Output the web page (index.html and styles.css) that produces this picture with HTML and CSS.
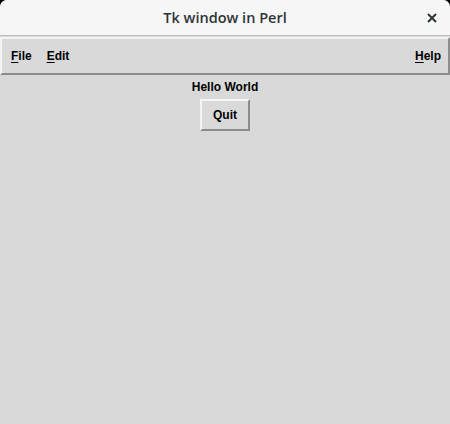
FILE: index.html
```html
<!DOCTYPE html>
<html>
<head>
<meta charset="utf-8">
<link rel="stylesheet" href="styles.css">
</head>
<body>
<div class="window">
  <div class="titlebar">
    <span class="title">Tk window in Perl</span>
    <svg class="close" width="10" height="10" viewBox="0 0 10 10"><path d="M1 1 L9 9 M9 1 L1 9" stroke="#2e3436" stroke-width="2"/></svg>
  </div>
  <div class="menubar">
    <span class="menu"><u>F</u>ile</span>
    <span class="menu"><u>E</u>dit</span>
    <span class="spacer"></span>
    <span class="menu"><u>H</u>elp</span>
  </div>
  <div class="content">
    <div class="label">Hello World</div>
    <div class="button">Quit</div>
  </div>
</div>
</body>
</html>
```
FILE: styles.css
```css
html, body {
  margin: 0;
  padding: 0;
  background: #000;
  width: 450px;
  height: 424px;
  overflow: hidden;
}
.window {
  width: 450px;
  height: 424px;
  background: #d9d9d9;
  border-radius: 7px 7px 0 0;
  overflow: hidden;
  display: flex;
  flex-direction: column;
}
.titlebar {
  height: 35px;
  background: #f6f6f6;
  border-bottom: 1px solid #bdbdbd;
  display: flex;
  align-items: center;
  justify-content: center;
  position: relative;
  flex-shrink: 0;
}
.title {
  font-family: "Open Sans", "Noto Sans", sans-serif;
  font-size: 14.5px;
  color: #2e3436;
  font-weight: 600;
}
.close {
  position: absolute;
  right: 13px;
  top: 13px;
}
.menubar {
  height: 34px;
  margin-top: 1px;
  border-top: 2px solid #f4f4f4;
  border-left: 2px solid #f4f4f4;
  border-bottom: 2px solid #8c8c8c;
  border-right: 2px solid #8c8c8c;
  display: flex;
  align-items: center;
  padding: 0 7px 0 9px;
  gap: 15px;
  flex-shrink: 0;
}
.menu {
  font-family: "Liberation Sans", Arial, sans-serif;
  font-weight: bold;
  font-size: 12px;
  color: #000;
}
.menu u {
  text-underline-offset: 2px;
}
.spacer {
  flex: 1;
}
.content {
  display: flex;
  flex-direction: column;
  align-items: center;
  padding-top: 5px;
}
.label {
  font-family: "Liberation Sans", Arial, sans-serif;
  font-weight: bold;
  font-size: 12px;
  color: #000;
  height: 15px;
  line-height: 15px;
}
.button {
  margin-top: 4px;
  width: 46px;
  height: 28px;
  border-top: 2px solid #f4f4f4;
  border-left: 2px solid #f4f4f4;
  border-bottom: 2px solid #8c8c8c;
  border-right: 2px solid #8c8c8c;
  display: flex;
  align-items: center;
  justify-content: center;
  font-family: "Liberation Sans", Arial, sans-serif;
  font-weight: bold;
  font-size: 12px;
  color: #000;
}
```
